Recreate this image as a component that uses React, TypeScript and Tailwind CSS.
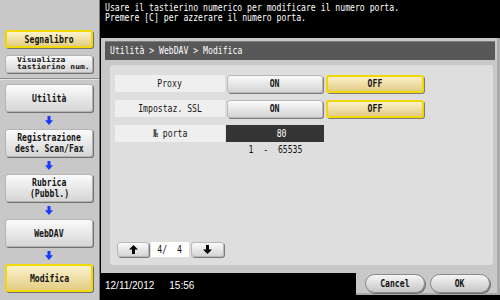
import type { ReactNode } from "react";

const mono = "font-['DejaVu_Sans_Mono',monospace]";

function T({ children, className = "" }: { children: ReactNode; className?: string }) {
  return <span className={`inline-block whitespace-pre scale-x-[0.74] ${className}`}>{children}</span>;
}

function BlueArrow() {
  return (
    <div className="h-[17px] w-[88px] flex items-center justify-center">
      <svg width="8" height="9" viewBox="0 0 8 9">
        <path d="M2.5 0h3v4.2H8L4 9 0 4.2h2.5z" fill="#1638ff" />
      </svg>
    </div>
  );
}

function SideButton({ children, active = false, className = "" }: { children: ReactNode; active?: boolean; className?: string }) {
  const skin = active
    ? "bg-linear-to-b from-[#fcf3cc] to-[#e3cd84] border-2 border-[#f0d800]"
    : "bg-linear-to-b from-[#fbfbfb] to-[#d6d6d6] border border-[#b4b4b4]";
  return (
    <div
      className={`w-[88px] flex flex-col items-center justify-center text-[#141414] rounded-[3px] shadow-[1px_1px_0_#707070] ${skin} ${className}`}
    >
      {children}
    </div>
  );
}

function Sidebar() {
  return (
    <div className={`w-[100px] h-[300px] shrink-0 bg-[#c8c8c8] border-r border-[#7a7a7a] flex flex-col text-[11px] leading-[11px] ${mono}`}>
      <div className="pl-[5px] pt-[30px]">
        <SideButton active className="h-[18px]">
          <T className="font-bold">Segnalibro</T>
        </SideButton>
        <SideButton className="h-[18px] mt-[7px]">
          <div className="flex flex-col items-start text-[7px] leading-[7px] font-bold">
            <span className="inline-block whitespace-pre scale-x-[1.15] origin-left">Visualizza</span>
            <span className="inline-block whitespace-pre scale-x-[1.15] origin-left">tastierino num.</span>
          </div>
        </SideButton>
      </div>
      <div className="mt-[5px] border-t border-[#8c8c8c] shadow-[0_1px_0_#e4e4e4]" />
      <div className="pl-[5px] pt-[5px] flex flex-col">
        <SideButton className="h-[28px]">
          <T className="font-bold">Utilità</T>
        </SideButton>
        <BlueArrow />
        <SideButton className="h-[28px]">
          <T className="font-bold">Registrazione</T>
          <T className="font-bold">dest. Scan/Fax</T>
        </SideButton>
        <BlueArrow />
        <SideButton className="h-[28px]">
          <T className="font-bold">Rubrica</T>
          <T className="font-bold">(Pubbl.)</T>
        </SideButton>
        <BlueArrow />
        <SideButton className="h-[28px]">
          <T className="font-bold">WebDAV</T>
        </SideButton>
        <BlueArrow />
        <SideButton active className="h-[28px]">
          <T className="font-bold">Modifica</T>
        </SideButton>
      </div>
    </div>
  );
}

function GrayButton({ children, className = "" }: { children: ReactNode; className?: string }) {
  return (
    <div
      className={`flex items-center justify-center rounded-[3px] bg-linear-to-b from-[#fbfbfb] to-[#d4d4d4] border border-[#b8b8b8] shadow-[1px_1px_0_#7c7c7c] ${className}`}
    >
      {children}
    </div>
  );
}

function YellowButton({ children, className = "" }: { children: ReactNode; className?: string }) {
  return (
    <div
      className={`flex items-center justify-center rounded-[3px] bg-linear-to-b from-[#fbf1c8] to-[#e2cc86] border-2 border-[#f0d800] shadow-[1px_1px_0_#7c7c7c] ${className}`}
    >
      {children}
    </div>
  );
}

function Label({ children }: { children: ReactNode }) {
  return (
    <div className="w-[110px] h-[17px] bg-[#efefef] flex items-center justify-center">
      <T>{children}</T>
    </div>
  );
}

function ToggleRow({ label }: { label: string }) {
  return (
    <div className="flex items-start h-[18px]">
      <Label>{label}</Label>
      <GrayButton className="ml-[2px] w-[96px] h-[18px]">
        <T className="font-bold">ON</T>
      </GrayButton>
      <YellowButton className="ml-[3px] w-[98px] h-[18px]">
        <T className="font-bold">OFF</T>
      </YellowButton>
    </div>
  );
}

function Arrow({ up }: { up?: boolean }) {
  return (
    <svg width="9" height="9" viewBox="0 0 9 9" className={up ? "" : "rotate-180"}>
      <path d="M4.5 0L9 4.6H6V9H3V4.6H0z" fill="#000" />
    </svg>
  );
}

export default function App() {
  return (
    <div className={`w-[500px] h-[300px] flex bg-black overflow-hidden text-[11px] leading-[10px] ${mono}`}>
      <Sidebar />
      <div className="w-[400px] flex flex-col">
        {/* message bar */}
        <div className="h-[38px] pl-[5px] pt-[3px] text-white">
          <div>
            <T className="origin-left">Usare il tastierino numerico per modificare il numero porta.</T>
          </div>
          <div>
            <T className="origin-left">Premere [C] per azzerare il numero porta.</T>
          </div>
        </div>

        {/* dialog */}
        <div className="ml-px h-[235px] bg-[#c8c8c8] border-r-[3px] border-[#a9a9a9] pt-[3px] pl-[4px] pr-[2px]">
          <div className="h-[19px] bg-[#585858] border-t border-[#7c7c7c] flex items-center pl-[5px] text-white">
            <T className="origin-left">Utilità &gt; WebDAV &gt; Modifica</T>
          </div>
          <div className="mt-[5px] ml-[5px] mr-[2px] h-[200px] rounded-[3px] bg-[#dedede] flex flex-col pt-[10px] pl-[5px] pb-[8px] text-[#141414]">
            <div className="flex flex-col gap-[7px]">
              <ToggleRow label="Proxy" />
              <ToggleRow label="Impostaz. SSL" />
              <div className="flex items-start">
                <Label>№ porta</Label>
                <div className="w-[98px] h-[17px] ml-px bg-[#343434] flex items-center justify-center pl-[14px] text-white">
                  <T>80</T>
                </div>
              </div>
            </div>
            <div className="ml-[111px] w-[98px] mt-[3px] flex justify-center">
              <T>1  -  65535</T>
            </div>

            <div className="flex-1" />

            {/* pager */}
            <div className="flex items-center pl-[2px] h-[15px]">
              <GrayButton className="w-[32px] h-[15px]">
                <Arrow up />
              </GrayButton>
              <div className="ml-[2px] w-[38px] h-[15px] bg-white flex items-center justify-center">
                <T>4/  4</T>
              </div>
              <GrayButton className="ml-[2px] w-[33px] h-[15px]">
                <Arrow />
              </GrayButton>
            </div>
          </div>
        </div>

        {/* bottom strip */}
        <div className="flex h-[27px]">
          <div className="flex-1 pl-[5px] pt-[7px] text-white font-['Liberation_Sans',sans-serif] text-[10px] leading-[12px] whitespace-pre">
            <span>12/11/2012</span>
            <span className="ml-[15px]">15:56</span>
          </div>
          <div className="w-[144px] h-[22px] bg-[#c8c8c8] border-r-[3px] border-b-2 border-[#a9a9a9] flex items-start pt-[1px] pl-[9px] gap-[5px]">
            <div className="w-[60px] h-[19px] rounded-full bg-linear-to-b from-[#f6f6f6] to-[#c6c6c6] border border-[#8a8a8a] shadow-[1px_1px_0_#6a6a6a] flex items-center justify-center text-[#141414]">
              <T className="font-bold">Cancel</T>
            </div>
            <div className="w-[60px] h-[19px] rounded-full bg-linear-to-b from-[#f6f6f6] to-[#c6c6c6] border border-[#8a8a8a] shadow-[1px_1px_0_#6a6a6a] flex items-center justify-center text-[#141414]">
              <T className="font-bold">OK</T>
            </div>
          </div>
        </div>
      </div>
    </div>
  );
}
